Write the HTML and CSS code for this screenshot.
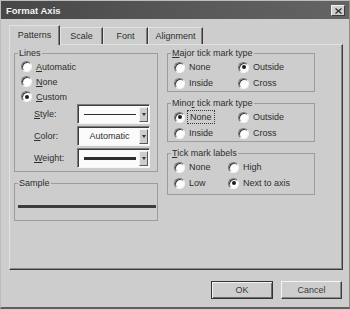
FILE: index.html
```html
<!DOCTYPE html>
<html lang="en">
<head>
  <meta charset="UTF-8" />
  <title>Format Axis</title>
  <link rel="stylesheet" href="styles.css">
</head>
<body>
  <div class="dialog">
    <div class="titlebar">
      <span class="title">Format Axis</span>
      <span class="close">
        <svg width="7" height="6" viewBox="0 0 7 6"><path d="M0.5 0.5 L6.5 5.5 M6.5 0.5 L0.5 5.5" stroke="#333" stroke-width="1.4"/></svg>
      </span>
    </div>

    <div class="tabs">
      <div class="tab tab-patterns active">Patterns</div>
      <div class="tab tab-scale">Scale</div>
      <div class="tab tab-font">Font</div>
      <div class="tab tab-align">Alignment</div>
    </div>

    <div class="page">
      <div class="col col-left">
        <fieldset class="group lines">
          <legend>Lines</legend>
          <label class="opt"><span class="radio"></span><u>A</u>utomatic</label>
          <label class="opt"><span class="radio"></span><u>N</u>one</label>
          <label class="opt"><span class="radio on"></span><u>C</u>ustom</label>

          <div class="field">
            <span class="flabel"><u>S</u>tyle:</span>
            <div class="combo">
              <div class="value"><span class="stroke thin"></span></div>
              <span class="drop"><span class="arrow"></span></span>
            </div>
          </div>
          <div class="field">
            <span class="flabel"><u>C</u>olor:</span>
            <div class="combo">
              <div class="value">Automatic</div>
              <span class="drop"><span class="arrow"></span></span>
            </div>
          </div>
          <div class="field">
            <span class="flabel"><u>W</u>eight:</span>
            <div class="combo">
              <div class="value"><span class="stroke thick"></span></div>
              <span class="drop"><span class="arrow"></span></span>
            </div>
          </div>
        </fieldset>

        <fieldset class="group sample">
          <legend>Sample</legend>
          <div class="sample-line"></div>
        </fieldset>
      </div>

      <div class="col col-right">
        <fieldset class="group">
          <legend><u>M</u>ajor tick mark type</legend>
          <div class="grid">
            <label class="opt"><span class="radio"></span>None</label>
            <label class="opt"><span class="radio on"></span>Outside</label>
            <label class="opt"><span class="radio"></span>Inside</label>
            <label class="opt"><span class="radio"></span>Cross</label>
          </div>
        </fieldset>

        <fieldset class="group">
          <legend>Mino<u>r</u> tick mark type</legend>
          <div class="grid">
            <label class="opt"><span class="radio on"></span><span class="focus">None</span></label>
            <label class="opt"><span class="radio"></span>Outside</label>
            <label class="opt"><span class="radio"></span>Inside</label>
            <label class="opt"><span class="radio"></span>Cross</label>
          </div>
        </fieldset>

        <fieldset class="group labels">
          <legend><u>T</u>ick mark labels</legend>
          <div class="grid narrow">
            <label class="opt"><span class="radio"></span>None</label>
            <label class="opt"><span class="radio"></span>High</label>
            <label class="opt"><span class="radio"></span>Low</label>
            <label class="opt"><span class="radio on"></span>Next to axis</label>
          </div>
        </fieldset>
      </div>
    </div>

    <div class="buttons">
      <button class="btn default">OK</button>
      <button class="btn cancel">Cancel</button>
    </div>
  </div>
</body>
</html>
```

FILE: styles.css
```css
* {
  box-sizing: border-box;
  margin: 0;
  padding: 0;
}

body {
  background: #cdcdcd;
  font-family: 'Liberation Sans', Arial, sans-serif;
  font-size: 9px;
  color: #2e2e2e;
}

u {
  text-decoration: underline;
  text-underline-offset: 1px;
}

/* Window frame */
.dialog {
  width: 350px;
  height: 309px;
  background: #cdcdcd;
  border-top: 1px solid #bdbdbd;
  border-left: 1px solid #bdbdbd;
  border-right: 1px solid #8a8a8a;
  border-bottom: 2px solid #5f5f5f;
}

.titlebar {
  height: 18px;
  display: flex;
  align-items: center;
  justify-content: space-between;
  padding: 1px 4px 0 5px;
  background: linear-gradient(to right, #474747, #5a5a5a 60%, #646464);
}

.title {
  color: #f2f2f2;
  font-weight: bold;
  font-size: 9.5px;
}

.close {
  width: 14px;
  height: 11px;
  display: flex;
  align-items: center;
  justify-content: center;
  background: #cfcfcf;
  border: 1px solid;
  border-color: #f2f2f2 #3c3c3c #3c3c3c #f2f2f2;
}

/* Tabs */
.tabs {
  display: flex;
  height: 18px;
  margin-top: 7px;
  padding-left: 8px;
  position: relative;
  z-index: 1;
}

.tab {
  height: 17px;
  margin-top: 1px;
  line-height: 16px;
  text-align: center;
  border-top: 1px solid #e2e2e2;
  border-left: 1px solid #e2e2e2;
  border-right: 1px solid #3a3a3a;
  box-shadow: inset -1px 0 0 #808080;
}

.tab.active {
  height: 20px;
  margin-top: -1px;
  line-height: 19px;
  background: #cdcdcd;
}

.tab-patterns { width: 51px; }
.tab-scale    { width: 43px; }
.tab-font     { width: 45px; }
.tab-align    { width: 55px; }

/* Tab page */
.page {
  margin-left: 8px;
  width: 334px;
  height: 226px;
  display: flex;
  gap: 9px;
  padding: 3px 4px;
  border: 1px solid;
  border-color: #e2e2e2 #3c3c3c #3c3c3c #e2e2e2;
  box-shadow: inset -1px -1px 0 #878787;
}

.col {
  display: flex;
  flex-direction: column;
  gap: 6px;
}

.col-left  { width: 144px; }
.col-right { width: 148px; }

.group {
  min-width: 0;
  border: 1px solid #9c9c9c;
  padding: 0 6px;
}

.group legend {
  line-height: 11px;
  padding: 0 1px;
  margin-left: -3px;
}

.opt {
  display: flex;
  align-items: center;
  height: 16px;
  white-space: nowrap;
}

.lines .opt {
  height: 15px;
}

.radio {
  width: 11px;
  height: 11px;
  flex: none;
  margin-right: 4px;
  border-radius: 50%;
  background: #fdfdfd;
  border: 1px solid;
  border-color: #767676 #f4f4f4 #f4f4f4 #767676;
  box-shadow: inset 1px 1px 0 #3e3e3e;
  display: flex;
  align-items: center;
  justify-content: center;
}

.radio.on::after {
  content: "";
  width: 4px;
  height: 4px;
  border-radius: 50%;
  background: #1e1e1e;
}

.focus {
  outline: 1px dotted #3a3a3a;
  outline-offset: 1px;
  padding: 0 1px;
}

.grid {
  display: grid;
  grid-template-columns: 64px 1fr;
}

.grid.narrow {
  grid-template-columns: 54px 1fr;
}

.labels {
  padding-bottom: 3px;
}

/* Style / Color / Weight rows */
.lines {
  padding-bottom: 3px;
}

.field {
  display: flex;
  align-items: center;
  margin-top: 2px;
}

.field:first-of-type {
  margin-top: 0;
}

.flabel {
  width: 56px;
  padding-left: 13px;
}

.combo {
  width: 73px;
  height: 20px;
  display: flex;
  background: #fbfbfb;
  border: 1px solid;
  border-color: #7a7a7a #f4f4f4 #f4f4f4 #7a7a7a;
  box-shadow: inset 1px 1px 0 #3e3e3e;
}

.combo .value {
  flex: 1;
  display: flex;
  align-items: center;
  justify-content: center;
  padding: 0 2px 0 4px;
}

.stroke {
  width: 52px;
  background: #2e2e2e;
}

.stroke.thin  { height: 1px; }
.stroke.thick { height: 3px; }

.drop {
  width: 9px;
  margin: 2px 1px 1px 0;
  background: #cdcdcd;
  border: 1px solid;
  border-color: #f2f2f2 #5a5a5a #5a5a5a #f2f2f2;
  display: flex;
  align-items: center;
  justify-content: center;
}

.arrow {
  border-top: 3px solid #333;
  border-left: 2.5px solid transparent;
  border-right: 2.5px solid transparent;
}

/* Sample */
.sample {
  padding: 0;
}

.sample legend {
  margin-left: 3px;
}

.sample-line {
  height: 3px;
  background: #3c3c3c;
  margin: 16px 1px 12px 3px;
}

/* Bottom buttons */
.buttons {
  display: flex;
  justify-content: flex-end;
  gap: 8px;
  margin-top: 11px;
  padding-right: 7px;
}

.btn {
  width: 62px;
  height: 18px;
  font-family: inherit;
  font-size: 9px;
  color: #3a3a3a;
  background: #cdcdcd;
  border: 1px solid;
  border-color: #f4f4f4 #3c3c3c #3c3c3c #f4f4f4;
  box-shadow: inset -1px -1px 0 #888;
}

.btn.default {
  border-color: #333;
  box-shadow: inset 1px 1px 0 #f4f4f4, inset -1px -1px 0 #6a6a6a;
}

.btn.cancel {
  width: 61px;
}
```
